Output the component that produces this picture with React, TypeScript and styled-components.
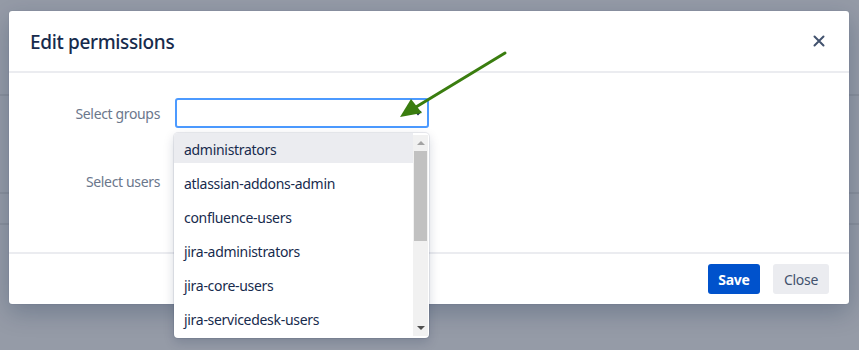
import styled, { createGlobalStyle } from "styled-components";

const GlobalStyle = createGlobalStyle`
  html, body { margin: 0; padding: 0; }
  body {
    background: #959ba7;
    font-family: "Noto Sans", "Open Sans", sans-serif;
    -webkit-font-smoothing: antialiased;
  }
`;

const Page = styled.div`
  position: relative; width: 859px; height: 350px; overflow: hidden;
  background: #959ba7;
`;

// faint rows of the page behind the blanket
const BehindRow = styled.div<{ $h: number }>`
  height: ${p => p.$h}px; border-bottom: 2px solid #8a909c;
`;

const Modal = styled.section`
  position: absolute; left: 9px; top: 11px; width: 840px; height: 293px;
  background: #fff; border-radius: 3px;
  box-shadow: 0 8px 24px rgba(9, 30, 66, 0.25), 0 0 1px rgba(9, 30, 66, 0.3);
  display: flex; flex-direction: column;
`;

const Header = styled.header`
  height: 60px; padding: 0 21px; border-bottom: 2px solid #ebecf0;
  display: flex; align-items: center; justify-content: space-between;
`;

const Title = styled.h1`
  margin: 0; font-size: 19px; font-weight: 500; color: #172b4d; letter-spacing: -0.35px;
  padding-top: 2px;
`;

const CloseIcon = styled.button`
  border: 0; background: none; padding: 0; width: 16px; height: 16px; cursor: pointer;
  display: flex; align-items: center; justify-content: center; margin-right: 1px;
`;

const Body = styled.div`
  flex: 1; padding: 25px 0 0 0; display: flex; flex-direction: column; gap: 44px;
  border-bottom: 2px solid #ebecf0;
`;

const Field = styled.div`
  display: grid; grid-template-columns: 151px 254px; column-gap: 15px; align-items: center;
`;

const Label = styled.label`
  text-align: right; font-size: 14px; color: #6b778c; letter-spacing: -0.35px;
`;

const SelectWrap = styled.div`
  position: relative; height: 30px;
`;

const SelectBox = styled.div`
  box-sizing: border-box; height: 30px; border: 2px solid #4c9aff; border-radius: 3px;
  background: #fff; display: flex; align-items: center; justify-content: flex-end;
  padding-right: 5px;
`;

const Menu = styled.div`
  position: absolute; left: -1px; top: 35px; width: 255px; height: 205px;
  background: #fff; border-radius: 4px; overflow: hidden; z-index: 2;
  box-shadow: 0 0 0 1px rgba(9, 30, 66, 0.08), 0 4px 11px rgba(9, 30, 66, 0.18);
  display: flex;
`;

const Options = styled.ul`
  list-style: none; margin: -4px 0 0 0; padding: 0; flex: 1;
`;

const Option = styled.li<{ $active?: boolean }>`
  box-sizing: border-box; height: 34px; display: flex; align-items: center;
  padding: 6px 0 0 10px;
  font-size: 14px; color: #172b4d; letter-spacing: -0.3px;
  background: ${p => (p.$active ? "#ebecf0" : "#fff")};
`;

const ScrollTrack = styled.div`
  width: 15px; margin: 2px 1px 2px 0; background: #f1f1f1;
  display: flex; flex-direction: column; align-items: center;
`;

const ScrollArrow = styled.div<{ $down?: boolean }>`
  height: 16px; width: 15px; display: flex; align-items: center; justify-content: center;
  &::after {
    content: ""; width: 0; height: 0;
    border-left: 4px solid transparent; border-right: 4px solid transparent;
    ${p => (p.$down ? "border-top: 4px solid #505050;" : "border-bottom: 4px solid #a3a3a3;")}
  }
`;

const ScrollThumb = styled.div`
  width: 13px; height: 90px; background: #c1c1c1;
`;

const ScrollRest = styled.div`
  flex: 1;
`;

const Footer = styled.footer`
  height: 50px; padding: 0 20px; display: flex; align-items: center; justify-content: flex-end;
  gap: 13px;
`;

const Button = styled.button<{ $primary?: boolean }>`
  height: 30px; border: 0; border-radius: 3px; padding: 0 10px; cursor: pointer;
  font-family: inherit; font-size: 14px; letter-spacing: -0.3px;
  background: ${p => (p.$primary ? "#0052cc" : "#ebecf0")};
  color: ${p => (p.$primary ? "#fff" : "#42526e")};
  font-weight: ${p => (p.$primary ? 700 : 400)};
  min-width: ${p => (p.$primary ? 52 : 56)}px;
`;

const Arrow = styled.svg`
  position: absolute; left: 390px; top: 45px; z-index: 3; pointer-events: none;
`;

const groups = [
  "administrators",
  "atlassian-addons-admin",
  "confluence-users",
  "jira-administrators",
  "jira-core-users",
  "jira-servicedesk-users",
];

export default function App() {
  return (
    <>
      <GlobalStyle />
      <Page>
        <BehindRow $h={94} />
        <BehindRow $h={96} />
        <BehindRow $h={29} />
        <Modal>
          <Header>
            <Title>Edit permissions</Title>
            <CloseIcon aria-label="Close">
              <svg width="12" height="12" viewBox="0 0 12 12">
                <path d="M1.5 1.5 L10.5 10.5 M10.5 1.5 L1.5 10.5" stroke="#42526e" strokeWidth="2" strokeLinecap="round" />
              </svg>
            </CloseIcon>
          </Header>
          <Body>
            <Field>
              <Label>Select groups</Label>
              <SelectWrap>
                <SelectBox>
                  <svg width="8" height="6" viewBox="0 0 8 6">
                    <path d="M1 1.3 L4 4.3 L7 1.3" fill="none" stroke="#172b4d" strokeWidth="1.6" />
                  </svg>
                </SelectBox>
                <Menu>
                  <Options>
                    {groups.map((g, i) => (
                      <Option key={g} $active={i === 0}>{g}</Option>
                    ))}
                  </Options>
                  <ScrollTrack>
                    <ScrollArrow />
                    <ScrollThumb />
                    <ScrollRest />
                    <ScrollArrow $down />
                  </ScrollTrack>
                </Menu>
              </SelectWrap>
            </Field>
            <Field>
              <Label>Select users</Label>
              <div />
            </Field>
          </Body>
          <Footer>
            <Button $primary>Save</Button>
            <Button>Close</Button>
          </Footer>
        </Modal>
        <Arrow width="130" height="85" viewBox="0 0 130 85">
          <line x1="115" y1="8" x2="26" y2="62" stroke="#3a7d0f" strokeWidth="3" strokeLinecap="round" />
          <path d="M10 72 L21 54 L32 68 Z" fill="#3a7d0f" />
        </Arrow>
      </Page>
    </>
  );
}
